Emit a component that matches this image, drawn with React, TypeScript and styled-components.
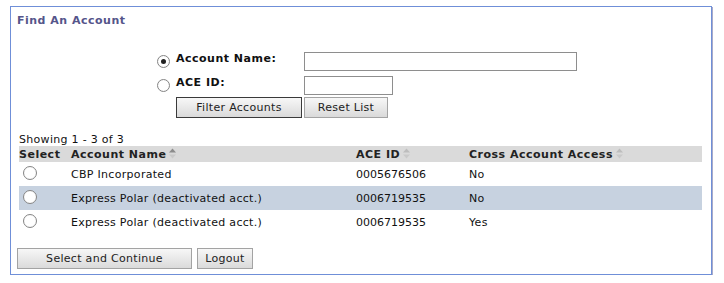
import React, { useState } from "react";
import styled, { createGlobalStyle } from "styled-components";

const GlobalStyle = createGlobalStyle`
  body {
    margin: 0;
    background: #ffffff;
    font-family: "DejaVu Sans", Verdana, sans-serif;
    font-size: 11px;
    letter-spacing: 0.3px;
    color: #111;
  }
`;

const Panel = styled.div`
  margin: 6px 0 0 10px;
  border: 1px solid #6f8fd8;
  box-shadow: 1px 1px 0 #a9abc9;
  padding: 7px 0 5px 6px;
  box-sizing: content-box;
  width: 694px;
`;

const Title = styled.div`
  font-weight: bold;
  letter-spacing: 0.5px;
  color: #55558a;
  line-height: 13px;
`;

const FilterGrid = styled.div`
  margin: 25px 0 0 140px;
  display: grid;
  grid-template-columns: 19px 128px auto;
  grid-template-rows: 24px 21px 21px;
`;

const Label = styled.label`
  font-weight: bold;
  letter-spacing: 0.5px;
  line-height: 13px;
`;

const TextInput = styled.input<{ $w: number }>`
  width: ${(p) => p.$w}px;
  height: 19px;
  box-sizing: border-box;
  border: 1px solid #8e8e8e;
  padding: 0 3px;
  font: inherit;
  margin: 0;
  display: block;
`;

const ButtonRow = styled.div`
  grid-column: 2 / 4;
  display: flex;
  gap: 2px;
`;

const Button = styled.button<{ $w: number; $default?: boolean }>`
  width: ${(p) => p.$w}px;
  height: 21px;
  margin: 0;
  padding: 0;
  font: inherit;
  letter-spacing: 0.3px;
  color: #222;
  background: linear-gradient(#f7f7f7, #dadada);
  border: 1px solid ${(p) => (p.$default ? "#3a3a3a" : "#a3a3a3")};
  border-radius: 0;
`;

const RadioDot = styled.span<{ $checked?: boolean; $size: number }>`
  display: inline-block;
  width: ${(p) => p.$size}px;
  height: ${(p) => p.$size}px;
  box-sizing: border-box;
  border-radius: 50%;
  border: 1px solid #858585;
  background: radial-gradient(circle, #ffffff 55%, #ececec 100%);
  position: relative;
  margin-top: ${(p) => (p.$size === 13 ? 3 : 0)}px;
  &::after {
    content: "";
    display: ${(p) => (p.$checked ? "block" : "none")};
    position: absolute;
    left: 50%;
    top: 50%;
    width: 5px;
    height: 5px;
    margin: -2.5px 0 0 -2.5px;
    border-radius: 50%;
    background: #222;
  }
`;

const Showing = styled.div`
  margin: 15px 0 0 2px;
  line-height: 13px;
`;

const Grid = styled.table`
  margin-left: 2px;
  width: 683px;
  border-collapse: collapse;
  table-layout: fixed;
`;

const Th = styled.th<{ $w?: number }>`
  width: ${(p) => (p.$w ? `${p.$w}px` : "auto")};
  height: 16px;
  padding: 0;
  background: #dadada;
  text-align: left;
  font-weight: bold;
  letter-spacing: 0.5px;
  color: #222;
  white-space: nowrap;
`;

const Tr = styled.tr<{ $hl?: boolean }>`
  background: ${(p) => (p.$hl ? "#c7d2e0" : "transparent")};
`;

const Td = styled.td<{ $pad?: number; $num?: boolean }>`
  height: 24px;
  padding: 0 0 0 ${(p) => p.$pad ?? 0}px;
  vertical-align: middle;
  line-height: 13px;
  letter-spacing: ${(p) => (p.$num ? 0 : 0.3)}px;
  color: #111;
`;

const SortIcon: React.FC<{ active?: boolean }> = ({ active }) => (
  <svg width="9" height="11" viewBox="0 0 9 11" style={{ verticalAlign: "-1px", marginLeft: 2 }}>
    <path d="M4.5 0.5 L8 4.5 L1 4.5 Z" fill={active ? "#8c8c8c" : "#bdbdbd"} />
    <path d="M4.5 10.5 L8 6.5 L1 6.5 Z" fill="#c9c9c9" />
  </svg>
);

const rows = [
  { name: "CBP Incorporated", id: "0005676506", cross: "No" },
  { name: "Express Polar (deactivated acct.)", id: "0006719535", cross: "No" },
  { name: "Express Polar (deactivated acct.)", id: "0006719535", cross: "Yes" }
];

const Footer = styled.div`
  margin-top: 14px;
  display: flex;
  gap: 5px;
`;

export default function App() {
  const [mode] = useState("name");
  return (
    <>
      <GlobalStyle />
      <Panel>
        <Title>Find An Account</Title>
        <FilterGrid>
          <RadioDot $size={13} $checked={mode === "name"} />
          <Label>Account Name:</Label>
          <TextInput $w={273} />
          <RadioDot $size={13} $checked={mode === "id"} />
          <Label>ACE ID:</Label>
          <TextInput $w={89} />
          <ButtonRow>
            <Button $w={126} $default>Filter Accounts</Button>
            <Button $w={84}>Reset List</Button>
          </ButtonRow>
        </FilterGrid>
        <Showing>Showing 1 - 3 of 3</Showing>
        <Grid>
          <thead>
            <tr>
              <Th $w={52}>Select</Th>
              <Th $w={285}>
                Account Name
                <SortIcon active />
              </Th>
              <Th $w={113}>
                ACE ID
                <SortIcon />
              </Th>
              <Th>
                Cross Account Access
                <SortIcon />
              </Th>
            </tr>
          </thead>
          <tbody>
            {rows.map((r, i) => (
              <Tr key={i} $hl={i === 1}>
                <Td $pad={4}>
                  <RadioDot $size={14} />
                </Td>
                <Td>{r.name}</Td>
                <Td $num>{r.id}</Td>
                <Td>{r.cross}</Td>
              </Tr>
            ))}
          </tbody>
        </Grid>
        <Footer>
          <Button $w={175}>Select and Continue</Button>
          <Button $w={56}>Logout</Button>
        </Footer>
      </Panel>
    </>
  );
}
